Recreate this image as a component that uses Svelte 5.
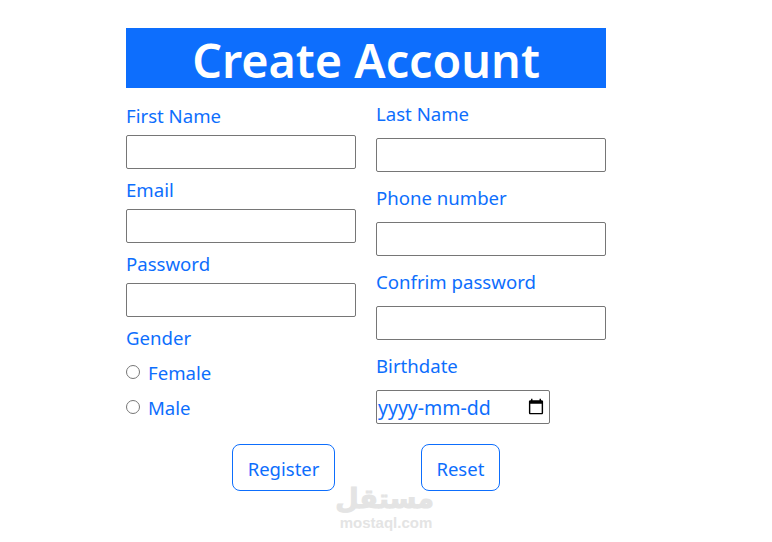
<script lang="ts">
  const left = [
    { label: "First Name", type: "text" },
    { label: "Email", type: "email" },
    { label: "Password", type: "password" },
  ];
  const right = [
    { label: "Last Name", type: "text" },
    { label: "Phone number", type: "tel" },
    { label: "Confrim password", type: "password" },
  ];
</script>

<main>
  <form class="form" onsubmit={(e) => e.preventDefault()}>
    <h1>Create Account</h1>
    <div class="cols">
      <div class="col">
        {#each left as f}
          <label class="field">
            <span>{f.label}</span>
            <input type={f.type} />
          </label>
        {/each}
        <div class="label">Gender</div>
        <label class="radio"><input type="radio" name="gender" /> Female</label>
        <label class="radio"><input type="radio" name="gender" /> Male</label>
      </div>
      <div class="col right">
        {#each right as f}
          <label class="field">
            <span>{f.label}</span>
            <input type={f.type} />
          </label>
        {/each}
        <label class="field">
          <span>Birthdate</span>
          <div class="date-wrap">
            <input class="date" type="date" />
            <div class="date-hint">yyyy-mm-dd</div>
          </div>
        </label>
      </div>
    </div>
    <div class="actions">
      <button type="submit">Register</button>
      <button type="reset">Reset</button>
    </div>
  </form>
  <div class="watermark">
    <div class="ar" dir="rtl" lang="ar">مستقل</div>
    <div class="en">mostaql.com</div>
  </div>
</main>

<style>
  :global(body) {
    background: #fff;
  }

  main {
    position: relative;
    width: 772px;
    height: 542px;
    overflow: hidden;
    font-family: "Noto Sans", "Open Sans", sans-serif;
    color: #0d6efd;
  }

  .form {
    width: 480px;
    margin-left: 126px;
    padding-top: 28px;
  }

  h1 {
    margin: 0;
    height: 60px;
    background: #0d6efd;
    color: #fff;
    font-size: 46.7px;
    font-weight: 600;
    line-height: 64px;
    text-align: center;
  }

  .cols {
    display: grid;
    grid-template-columns: 230px 230px;
    gap: 20px;
    margin-top: 11px;
  }

  .col {
    display: flex;
    flex-direction: column;
    padding-top: 2px;
  }

  .col.right {
    padding-top: 0;
  }

  .field {
    display: block;
    margin-bottom: 6px;
  }

  .right .field {
    margin-bottom: 11px;
  }

  .field span,
  .label {
    display: block;
    font-size: 18.6px;
    line-height: 30px;
    margin-bottom: 4px;
  }

  .right .field span {
    margin-bottom: 9px;
  }

  .field input {
    display: block;
    box-sizing: border-box;
    width: 230px;
    height: 34px;
    margin: 0;
    padding: 1px 2px;
    border: 1px solid #767676;
    border-radius: 2px;
    background: #fff;
    font-family: inherit;
    font-size: 18.5px;
    color: #0d6efd;
  }

  .date-wrap {
    position: relative;
    width: 174px;
  }

  .field input.date {
    width: 174px;
    padding: 0 2px 0 1px;
  }

  .date::-webkit-datetime-edit {
    color: transparent;
  }

  .date-hint {
    position: absolute;
    left: 2px;
    top: 1px;
    line-height: 34px;
    font-size: 19.5px;
    pointer-events: none;
  }

  .label {
    margin-bottom: 3px;
  }

  .radio {
    display: flex;
    align-items: center;
    height: 35px;
    padding-bottom: 2px;
    box-sizing: border-box;
    font-size: 18.6px;
    gap: 8px;
  }

  .radio input {
    width: 14px;
    height: 14px;
    margin: -2px 0 0 0;
  }

  .actions {
    display: flex;
    justify-content: center;
    gap: 86px;
    margin-top: 9px;
  }

  button {
    height: 47px;
    padding: 3px 14.5px 0;
    border: 1px solid #0d6efd;
    border-radius: 8px;
    background: #fff;
    color: #0d6efd;
    font-family: inherit;
    font-size: 18.5px;
    line-height: 1;
  }

  .watermark {
    position: absolute;
    left: 338px;
    top: 483px;
    width: 96px;
    text-align: center;
    color: #e4e4e4;
    pointer-events: none;
  }

  .ar {
    font-family: "DejaVu Sans", sans-serif;
    font-size: 27px;
    font-weight: 700;
    line-height: 32px;
    -webkit-text-stroke: 1px #e4e4e4;
  }

  .en {
    font-family: "Liberation Sans", sans-serif;
    font-size: 15px;
    font-weight: 700;
    line-height: 16px;
  }
</style>
